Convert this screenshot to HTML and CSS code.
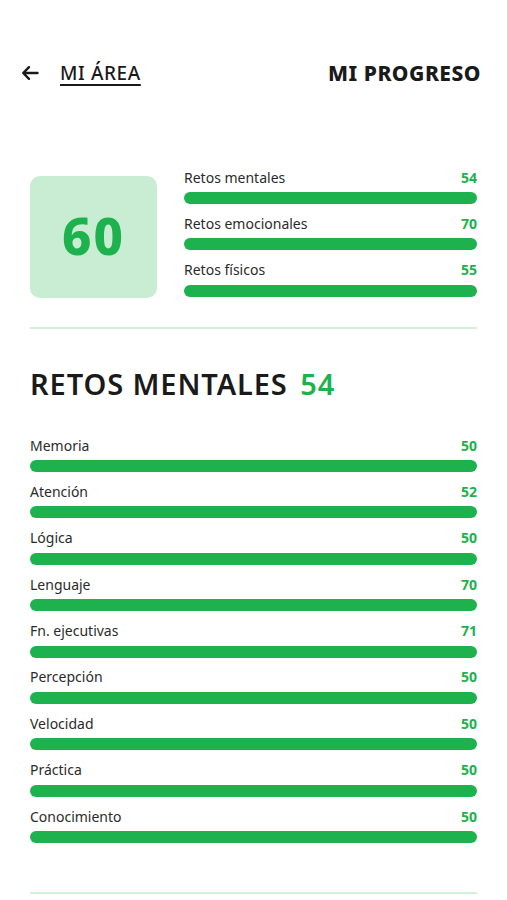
FILE: index.html
```html
<!DOCTYPE html>
<html lang="es">
<head>
    <meta charset="UTF-8">
    <meta name="viewport" content="width=device-width, initial-scale=1.0">
    <title>Mi progreso</title>
    <link rel="stylesheet" href="styles.css">
</head>
<body>
    <!-- Top bar -->
    <header class="top-bar">
        <a class="back-link" href="#">
            <svg class="back-icon" viewBox="0 0 20 20" width="20" height="20">
                <path d="M17.5 10H3.5M9 4.2L3.2 10L9 15.8" fill="none" stroke="#1a1a1a" stroke-width="2.4" stroke-linecap="round" stroke-linejoin="round"/>
            </svg>
            <span>MI ÁREA</span>
        </a>
        <h1>MI PROGRESO</h1>
    </header>

    <main class="page">
        <!-- Overall score -->
        <section class="summary">
            <div class="score-box">60</div>
            <div class="bars">
                <div class="bar-row">
                    <div class="bar-label"><span>Retos mentales</span><strong>54</strong></div>
                    <div class="bar"></div>
                </div>
                <div class="bar-row">
                    <div class="bar-label"><span>Retos emocionales</span><strong>70</strong></div>
                    <div class="bar"></div>
                </div>
                <div class="bar-row">
                    <div class="bar-label"><span>Retos físicos</span><strong>55</strong></div>
                    <div class="bar"></div>
                </div>
            </div>
        </section>

        <hr class="divider">

        <!-- Mental challenges detail -->
        <h2 class="section-title">RETOS MENTALES <span>54</span></h2>

        <section class="bars detail">
            <div class="bar-row">
                <div class="bar-label"><span>Memoria</span><strong>50</strong></div>
                <div class="bar"></div>
            </div>
            <div class="bar-row">
                <div class="bar-label"><span>Atención</span><strong>52</strong></div>
                <div class="bar"></div>
            </div>
            <div class="bar-row">
                <div class="bar-label"><span>Lógica</span><strong>50</strong></div>
                <div class="bar"></div>
            </div>
            <div class="bar-row">
                <div class="bar-label"><span>Lenguaje</span><strong>70</strong></div>
                <div class="bar"></div>
            </div>
            <div class="bar-row">
                <div class="bar-label"><span>Fn. ejecutivas</span><strong>71</strong></div>
                <div class="bar"></div>
            </div>
            <div class="bar-row">
                <div class="bar-label"><span>Percepción</span><strong>50</strong></div>
                <div class="bar"></div>
            </div>
            <div class="bar-row">
                <div class="bar-label"><span>Velocidad</span><strong>50</strong></div>
                <div class="bar"></div>
            </div>
            <div class="bar-row">
                <div class="bar-label"><span>Práctica</span><strong>50</strong></div>
                <div class="bar"></div>
            </div>
            <div class="bar-row">
                <div class="bar-label"><span>Conocimiento</span><strong>50</strong></div>
                <div class="bar"></div>
            </div>
        </section>

        <hr class="divider bottom">
    </main>
</body>
</html>
```

FILE: styles.css
```css
/* Base */
body {
    margin: 0;
    padding: 0;
    background: #fff;
    color: #1a1a1a;
    font-family: "Noto Sans", Lato, sans-serif;
}

/* Top bar */
.top-bar {
    display: flex;
    justify-content: space-between;
    align-items: center;
    height: 24px;
    padding: 61px 26px 0 20px;
}

.back-link {
    display: flex;
    align-items: center;
    gap: 20px;
    color: #1a1a1a;
    text-decoration: none;
}

.back-link span {
    font-size: 19px;
    font-weight: 500;
    letter-spacing: 0.6px;
    text-decoration: underline;
    text-underline-offset: 4px;
    text-decoration-thickness: 1.5px;
}

.top-bar h1 {
    margin: 0;
    font-size: 21px;
    font-weight: 800;
    letter-spacing: 0.5px;
    line-height: 24px;
}

/* Page */
.page {
    padding: 0 30px;
}

.summary {
    display: flex;
    gap: 27px;
    margin-top: 83px;
}

.score-box {
    flex: 0 0 127px;
    height: 122px;
    margin-top: 8px;
    border-radius: 10px;
    background: #c8edd2;
    color: #1db24d;
    font-size: 51px;
    font-weight: 800;
    letter-spacing: 2px;
    line-height: 1;
    padding-bottom: 4px;
    box-sizing: border-box;
    display: flex;
    align-items: center;
    justify-content: center;
}

.bars {
    flex: 1;
    display: flex;
    flex-direction: column;
    gap: 10.4px;
}

.bar-row {
    height: 36px;
}

.bar-label {
    display: flex;
    justify-content: space-between;
    align-items: center;
    height: 18px;
    margin-bottom: 6px;
    font-size: 14px;
    color: #2b2b2b;
}

.bar-label strong {
    color: #1db24d;
    font-weight: 700;
}

.bar {
    height: 12px;
    border-radius: 6px;
    background: #1db24d;
}

.divider {
    margin: 29px 0 0;
    border: none;
    height: 2px;
    background: #d2f0da;
}

.divider.bottom {
    margin-top: 49px;
}

.section-title {
    margin: 38px 0 0;
    font-size: 29px;
    font-weight: 600;
    letter-spacing: 0.9px;
    line-height: 34px;
    color: #1a1a1a;
}

.section-title span {
    margin-left: 4px;
    color: #1db24d;
}

.detail {
    margin-top: 35px;
}
```
